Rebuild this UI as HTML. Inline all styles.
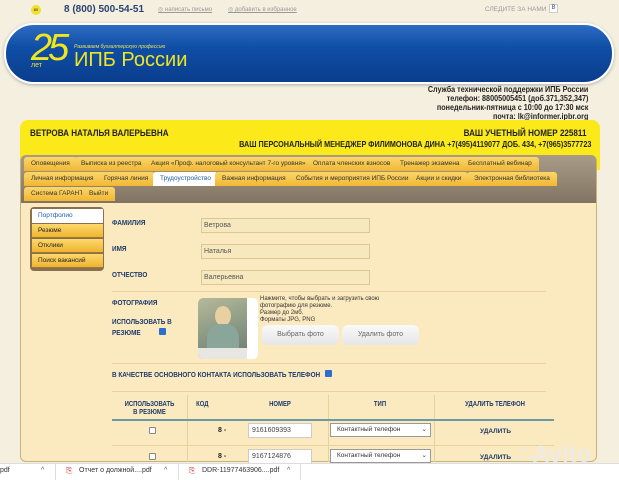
<!DOCTYPE html>
<html><head><meta charset="utf-8"><style>
*{margin:0;padding:0;box-sizing:border-box}
body{width:619px;height:480px;overflow:hidden;background:#f4efdf;font-family:"Liberation Sans",sans-serif;position:relative;color:#222}
.a{position:absolute;white-space:nowrap}
.tab{position:absolute;height:14px;background:linear-gradient(#fbd66a,#f2b733);border-radius:3px 3px 0 0;font-size:6.5px;line-height:14px;padding:0 7px;color:#333}
.lbl{position:absolute;font-size:7.5px;font-weight:bold;color:#1e3a6a;transform:scaleX(.85);transform-origin:left}
.inp{position:absolute;left:201px;width:169px;height:15px;background:#f7e8be;border:1px solid #d9c896;font-size:7px;line-height:13px;padding-left:2px;color:#555}
.side{position:absolute;left:32px;width:71px;height:14px;background:linear-gradient(#fcd86c,#f1b431);font-size:6.5px;line-height:14px;padding-left:6px;border-bottom:1px solid #9a7a30}
.th{position:absolute;font-size:7px;font-weight:bold;color:#1e3a6a;text-align:center;transform:scaleX(.85)}
.cb{position:absolute;width:7px;height:7px;border:1px solid #888;background:#fff;border-radius:1px}
.cbc{position:absolute;width:7px;height:7px;background:#2a6fd0;border-radius:1px}
</style></head><body>
<div class="a" style="left:31px;top:5px;width:10px;height:10px;border-radius:50%;background:#f0e030;font-size:4px;text-align:center;line-height:10px">80</div>
<div class="a" style="left:64px;top:4px;font-size:10px;font-weight:bold;color:#2a4270">8 (800) 500-54-51</div>
<div class="a" style="left:158px;top:6px;font-size:6px;color:#999;text-decoration:underline">◎ написать письмо</div>
<div class="a" style="left:228px;top:6px;font-size:6px;color:#999;text-decoration:underline">◎ добавить в избранное</div>
<div class="a" style="left:485px;top:6px;font-size:6.5px;color:#999">СЛЕДИТЕ ЗА НАМИ</div>
<div class="a" style="left:549px;top:4px;width:9px;height:9px;border:1px solid #ccc;font-size:6px;text-align:center;color:#357;background:#fff">В</div>
<div class="a" style="left:4px;top:23px;width:610px;height:61px;border-radius:30px;background:linear-gradient(#2e6cc2,#0f4ea6 40%,#0a3d8c);border:2px solid #fff;box-shadow:0 1px 3px #aaa"></div>
<div class="a" style="left:31px;top:27px;font-size:38px;color:#f0e620;font-style:italic;letter-spacing:-4px">25</div>
<div class="a" style="left:31px;top:62px;font-size:7px;color:#f0e620">лет</div>
<div class="a" style="left:74px;top:44px;font-size:5px;color:#e8e060;font-style:italic">Развиваем бухгалтерскую профессию</div>
<div class="a" style="left:74px;top:49px;font-size:20px;color:#f0e620">ИПБ России</div>
<div class="a" style="right:31px;top:85px;font-size:8px;font-weight:bold;line-height:9px;text-align:right;transform:scaleX(.9);transform-origin:right">Служба технической поддержки ИПБ России<br>телефон: 88005005451 (доб.371,352,347)<br>понедельник-пятница с 10:00 до 17:30 мск<br>почта: lk@informer.ipbr.org</div>
<div class="a" style="left:20px;top:120px;width:580px;height:50px;background:#fbe91a;border-radius:8px 8px 0 0"></div>
<div class="a" style="left:30px;top:128px;font-size:9.5px;font-weight:bold;transform:scaleX(.85);transform-origin:left">ВЕТРОВА НАТАЛЬЯ ВАЛЕРЬЕВНА</div>
<div class="a" style="right:33px;top:128px;font-size:9.5px;font-weight:bold;transform:scaleX(.85);transform-origin:right">ВАШ УЧЕТНЫЙ НОМЕР 225811</div>
<div class="a" style="right:28px;top:139px;font-size:8.5px;font-weight:bold;transform:scaleX(.85);transform-origin:right">ВАШ ПЕРСОНАЛЬНЫЙ МЕНЕДЖЕР ФИЛИМОНОВА ДИНА +7(495)4119077 ДОБ. 434, +7(965)3577723</div>
<div class="a" style="left:20px;top:155px;width:577px;height:307px;background:#fbeac0;border:1px solid #c9b27a;border-radius:6px"></div>
<div class="a" style="left:21px;top:155px;width:575px;height:48px;background:linear-gradient(#a89c88,#827462);border-radius:5px 5px 0 0"></div>
<div class="tab" style="left:24px;top:157px">Оповещения</div>
<div class="tab" style="left:74px;top:157px">Выписка из реестра</div>
<div class="tab" style="left:144px;top:157px">Акция «Проф. налоговый консультант 7-го уровня»</div>
<div class="tab" style="left:306px;top:157px">Оплата членских взносов</div>
<div class="tab" style="left:393px;top:157px">Тренажер экзамена</div>
<div class="tab" style="left:461px;top:157px">Бесплатный вебинар</div>
<div class="tab" style="left:24px;top:172px">Личная информация</div>
<div class="tab" style="left:97px;top:172px">Горячая линия</div>
<div class="tab" style="left:153px;top:172px;background:#fff;color:#1a5ca8">Трудоустройство</div>
<div class="tab" style="left:215px;top:172px">Важная информация</div>
<div class="tab" style="left:289px;top:172px">События и мероприятия ИПБ России</div>
<div class="tab" style="left:409px;top:172px">Акции и скидки</div>
<div class="tab" style="left:467px;top:172px">Электронная библиотека</div>
<div class="tab" style="left:24px;top:187px">Система ГАРАНТ</div>
<div class="tab" style="left:82px;top:187px">Выйти</div>
<div class="a" style="left:30px;top:207px;width:74px;height:64px;background:#8a7050;border-radius:4px"></div>
<div class="side" style="top:209px;background:#fff;color:#1a5ca8;border:none">Портфолио</div>
<div class="side" style="top:224px">Резюме</div>
<div class="side" style="top:239px">Отклики</div>
<div class="side" style="top:254px">Поиск вакансий</div>
<div class="lbl" style="left:112px;top:218px">ФАМИЛИЯ</div>
<div class="lbl" style="left:112px;top:244px">ИМЯ</div>
<div class="lbl" style="left:112px;top:270px">ОТЧЕСТВО</div>
<div class="inp" style="top:218px">Ветрова</div>
<div class="inp" style="top:244px">Наталья</div>
<div class="inp" style="top:270px">Валерьевна</div>
<div class="a" style="left:112px;top:291px;width:434px;height:1px;background:#e6d29e"></div>
<div class="lbl" style="left:112px;top:298px">ФОТОГРАФИЯ</div>
<div class="lbl" style="left:112px;top:316px;line-height:11px">ИСПОЛЬЗОВАТЬ В<br>РЕЗЮМЕ</div>
<div class="cbc" style="left:159px;top:328px"></div>
<div class="a" style="left:198px;top:298px;width:60px;height:61px;background:#fff;border-radius:5px;overflow:hidden"><div style="width:49px;height:61px;background:linear-gradient(160deg,#b7b99a,#8c9a86 50%,#6b7a70);position:relative"><div style="position:absolute;left:17px;top:8px;width:16px;height:20px;border-radius:50%;background:#e8d0a0"></div><div style="position:absolute;left:9px;top:26px;width:32px;height:35px;border-radius:40% 40% 0 0;background:#8aa59a"></div><div style="position:absolute;left:0;top:50px;width:49px;height:11px;background:#e8e6e2"></div></div></div>
<div class="a" style="left:260px;top:296px;font-size:6px;line-height:7px;color:#333">Нажмите, чтобы выбрать и загрузить свою<br>фотографию для резюме.<br>Размер до 2мб.<br>Форматы JPG, PNG</div>
<div class="a" style="left:262px;top:325px;width:77px;height:20px;border-radius:6px;background:linear-gradient(#fafafa,#e6e6e6);font-size:7px;color:#666;text-align:center;line-height:20px">Выбрать фото</div>
<div class="a" style="left:342px;top:325px;width:77px;height:20px;border-radius:6px;background:linear-gradient(#fafafa,#e6e6e6);font-size:7px;color:#666;text-align:center;line-height:20px">Удалить фото</div>
<div class="a" style="left:112px;top:363px;width:434px;height:1px;background:#e6d29e"></div>
<div class="lbl" style="left:112px;top:370px">В КАЧЕСТВЕ ОСНОВНОГО КОНТАКТА ИСПОЛЬЗОВАТЬ ТЕЛЕФОН</div>
<div class="cbc" style="left:325px;top:370px"></div>
<div class="a" style="left:112px;top:391px;width:434px;height:1px;background:#e6d29e"></div>
<div class="a" style="left:187px;top:395px;width:1px;height:67px;background:#e6d29e"></div>
<div class="a" style="left:328px;top:395px;width:1px;height:67px;background:#e6d29e"></div>
<div class="a" style="left:434px;top:395px;width:1px;height:67px;background:#e6d29e"></div>
<div class="a" style="left:112px;top:419px;width:442px;height:2px;background:#6d9aa0"></div>
<div class="a" style="left:112px;top:445px;width:442px;height:1px;background:#e6d29e"></div>
<div class="th" style="left:112px;top:401px;width:75px;line-height:8px">ИСПОЛЬЗОВАТЬ<br>В РЕЗЮМЕ</div>
<div class="th" style="left:195px;top:401px">КОД</div>
<div class="th" style="left:260px;top:401px;width:40px">НОМЕР</div>
<div class="th" style="left:360px;top:401px;width:40px">ТИП</div>
<div class="th" style="left:455px;top:401px;width:80px">УДАЛИТЬ ТЕЛЕФОН</div>
<div class="cb" style="left:149px;top:427px"></div>
<div class="cb" style="left:149px;top:453px"></div>
<div class="a" style="left:218px;top:427px;font-size:7px;font-weight:bold">8 -</div>
<div class="a" style="left:218px;top:453px;font-size:7px;font-weight:bold">8 -</div>
<div class="a" style="left:248px;top:423px;width:64px;height:15px;background:#fff;border:1px solid #ccc;font-size:7px;line-height:13px;padding-left:3px;color:#444">9161609393</div>
<div class="a" style="left:248px;top:449px;width:64px;height:15px;background:#fff;border:1px solid #ccc;font-size:7px;line-height:13px;padding-left:3px;color:#444">9167124876</div>
<div class="a" style="left:330px;top:423px;width:101px;height:14px;background:#fff;border:1px solid #999;font-size:6.5px;line-height:12px;padding-left:6px;color:#333">Контактный телефон<span style="float:right;padding-right:3px">⌄</span></div>
<div class="a" style="left:330px;top:449px;width:101px;height:14px;background:#fff;border:1px solid #999;font-size:6.5px;line-height:12px;padding-left:6px;color:#333">Контактный телефон<span style="float:right;padding-right:3px">⌄</span></div>
<div class="a" style="left:480px;top:428px;font-size:6.5px;font-weight:bold;color:#1e3a6a">УДАЛИТЬ</div>
<div class="a" style="left:480px;top:454px;font-size:6.5px;font-weight:bold;color:#1e3a6a">УДАЛИТЬ</div>
<div class="a" style="left:517px;top:440px;font-size:24px;font-weight:bold;color:rgba(235,235,235,.85)">∴Avito</div>
<div class="a" style="left:0;top:463px;width:619px;height:17px;background:#fff;border-top:1px solid #ddd"></div>
<div class="a" style="left:0;top:467px;font-size:7px;color:#333">pdf</div>
<div class="a" style="left:41px;top:467px;font-size:7px;color:#555">^</div>
<div class="a" style="left:55px;top:463px;width:1px;height:17px;background:#ddd"></div>
<div class="a" style="left:66px;top:466px;font-size:8px;color:#d33">⎘</div>
<div class="a" style="left:79px;top:467px;font-size:7px;color:#333">Отчет о должной....pdf</div>
<div class="a" style="left:164px;top:467px;font-size:7px;color:#555">^</div>
<div class="a" style="left:178px;top:463px;width:1px;height:17px;background:#ddd"></div>
<div class="a" style="left:189px;top:466px;font-size:8px;color:#d33">⎘</div>
<div class="a" style="left:202px;top:467px;font-size:7px;color:#333">DDR-11977463906....pdf</div>
<div class="a" style="left:287px;top:467px;font-size:7px;color:#555">^</div>
<div class="a" style="left:300px;top:463px;width:1px;height:17px;background:#ddd"></div>
</body></html>
